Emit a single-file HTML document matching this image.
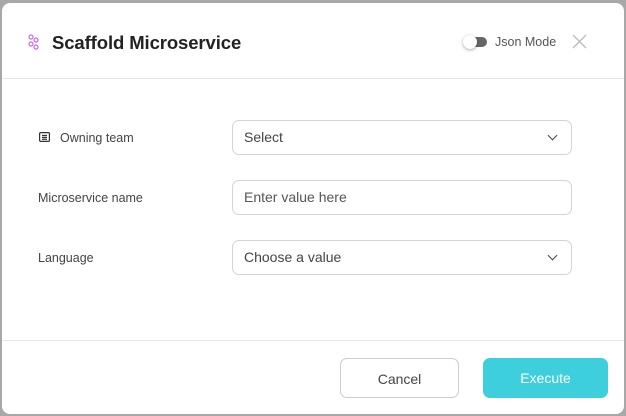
<!DOCTYPE html><html><head><style>
body{margin:0;width:626px;height:416px;background:#a8a8a8;font-family:"Liberation Sans",sans-serif;overflow:hidden;position:relative}
.m{position:absolute;left:2px;top:3px;width:622px;height:411px;background:#fff;border-radius:8px;overflow:hidden}
.h{position:absolute;left:0;top:0;width:100%;height:75px;border-bottom:1px solid #e6e6e6}
.t{position:absolute;left:50px;top:29px;font-size:18.5px;color:#222;font-weight:bold;letter-spacing:-0.1px}
.lbl{position:absolute;left:36px;font-size:12.5px;color:#444}
.in{position:absolute;left:230px;width:340px;height:35px;border:1px solid #d4d4d4;border-radius:7px;box-sizing:border-box;font-size:14px;color:#444;line-height:33px;padding-left:11px}
.chev{position:absolute;right:15px;top:11px;width:6px;height:6px;border-right:1.5px solid #444;border-bottom:1.5px solid #444;transform:rotate(45deg)}
.f{position:absolute;left:0;top:337px;width:100%;border-top:1px solid #e6e6e6}
.b{position:absolute;top:355px;height:40px;border-radius:7px;box-sizing:border-box;text-align:center;line-height:40px;font-size:14px}
</style></head><body><div class="m">
<div class="h">
<svg style="position:absolute;left:26px;top:31px" width="12" height="16" viewBox="0 0 12 16" fill="none" stroke="#c46bf0" stroke-width="1.2"><circle cx="3" cy="3" r="2"/><circle cx="8" cy="6" r="2"/><circle cx="3" cy="10" r="2"/><circle cx="8" cy="13" r="2"/></svg>
<div class="t">Scaffold Microservice</div>
<div style="position:absolute;left:463px;top:34px;width:22px;height:10px;border-radius:5px;background:#666"></div>
<div style="position:absolute;left:461px;top:32px;width:14px;height:14px;border-radius:7px;background:#fff;box-shadow:0 1px 3px rgba(0,0,0,.35)"></div>
<div style="position:absolute;left:493px;top:32px;font-size:12.5px;color:#555">Json Mode</div>
<svg style="position:absolute;left:570px;top:31px" width="15" height="15" stroke="#bbb" stroke-width="1.3"><path d="M1 1L14 14M14 1L1 14"/></svg>
</div>
<svg style="position:absolute;left:37px;top:129px" width="11" height="10" fill="none" stroke="#333" stroke-width="1.2"><rect x=".6" y=".6" width="9.8" height="8.8" rx="1"/><path d="M3 3.5h5M3 5.5h5M3 7.3h5"/></svg>
<div class="lbl" style="left:58px;top:128px">Owning team</div>
<div class="in" style="top:117px">Select<div class="chev"></div></div>
<div class="lbl" style="top:188px">Microservice name</div>
<div class="in" style="top:177px;color:#555">Enter value here</div>
<div class="lbl" style="top:248px">Language</div>
<div class="in" style="top:237px">Choose a value<div class="chev"></div></div>
<div class="f"></div>
<div class="b" style="left:338px;width:119px;border:1px solid #ccc;color:#444">Cancel</div>
<div class="b" style="left:481px;width:125px;background:#3ecfdc;color:#fff">Execute</div>
</div></body></html>
